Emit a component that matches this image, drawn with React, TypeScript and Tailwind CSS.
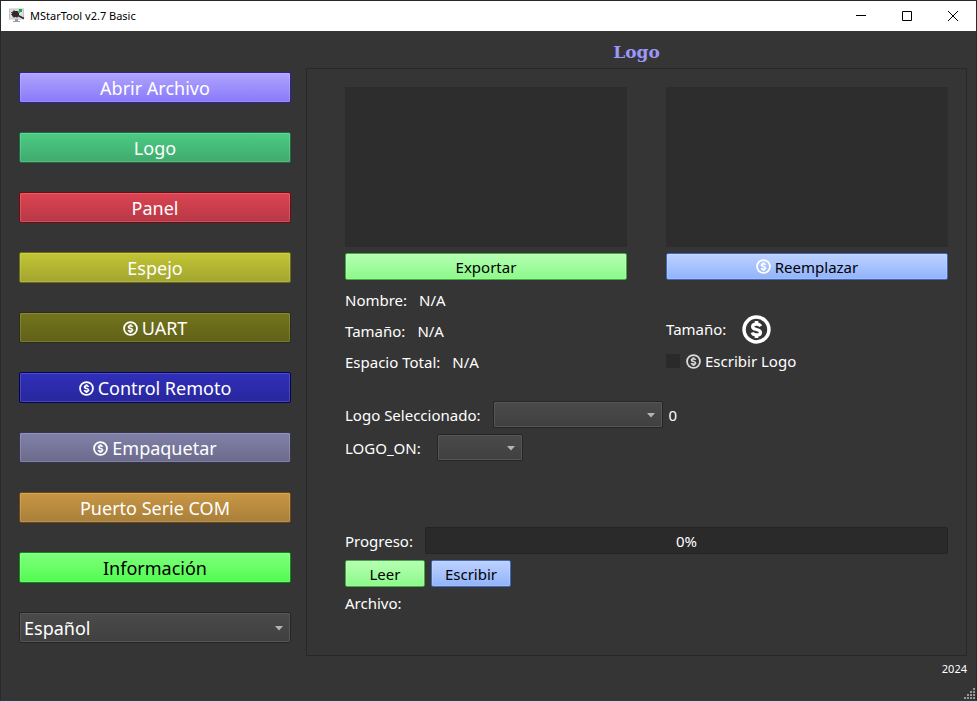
import type { ReactNode } from "react";

function DollarIcon({ className }: { className: string }) {
  return (
    <svg viewBox="0 0 24 24" fill="none" stroke="currentColor" className={className} aria-hidden="true">
      <circle cx="12" cy="12" r="10.3" strokeWidth="2.9" />
      <path d="M15.4 9.3C14.8 8 13.500 7.600 12 7.600c-1.900 0-3.200.8-3.200 2.100 0 1.500 1.500 1.900 3.200 2.300s3.300.9 3.300 2.400c0 1.400-1.400 2.100-3.300 2.100-1.800 0-3.100-.6-3.500-2" strokeWidth="2.700" />
      <path d="M12 5v3M12 16v3" strokeWidth="3" />
    </svg>
  );
}

function AppIcon() {
  return (
    <svg viewBox="0 0 16 16" className="size-4" aria-hidden="true">
      <rect x="0.500" y="1" width="14" height="10" fill="#dcdee0" stroke="#c3c5c8" />
      <path d="M6 11h3v2h2v1H4v-1h2z" fill="#9a9da0" />
      <rect x="3" y="3" width="7" height="6" rx="2" fill="#33272b" />
      <path d="M3 4.500H2M3 6.500H2M5 9v1M8 9v1M5 3V2" stroke="#55494c" />
      <path d="M9 7.500l6 3" stroke="#33272b" strokeWidth="1.600" />
      <rect x="10" y="1" width="3" height="3" fill="#23a047" />
      <rect x="9" y="3" width="2" height="2" fill="#2fbf56" />
    </svg>
  );
}

function SelectBox({ id, label, className, children }: { id: string; label?: string; className: string; children?: ReactNode }) {
  return (
    <div className={`relative ${className}`}>
      <select
        id={id}
        aria-label={label}
        className="block size-full appearance-none rounded-xs border border-[#252525] bg-linear-to-b from-[#4a4a4a] to-[#404040] pl-1 pr-6 pt-px inset-ring inset-ring-[#565656] outline-none"
      >
        {children}
      </select>
      <svg viewBox="0 0 8 5" className="pointer-events-none absolute right-2 top-1/2 -mt-0.5 h-[5px] w-2" aria-hidden="true">
        <path d="M0 0h8L4 4.500z" fill="#b4b4b4" />
      </svg>
    </div>
  );
}

const navItems = [
  { text: "Abrir Archivo", paid: false, style: "border-[#2c2492] from-[#b0a3ff] to-[#8a79f8] text-white" },
  { text: "Logo", paid: false, style: "border-[#1c6b40] from-[#4ccc85] to-[#40aa6e] text-white" },
  { text: "Panel", paid: false, style: "border-[#740912] from-[#dc4452] to-[#b83846] text-white" },
  { text: "Espejo", paid: false, style: "border-[#6b6d12] from-[#c2c534] to-[#a2a52e] text-white" },
  { text: "UART", paid: true, style: "border-[#2c2d16] from-[#74751c] to-[#606118] text-white" },
  { text: "Control Remoto", paid: true, style: "border-[#02025c] from-[#302fba] to-[#28279c] text-white" },
  { text: "Empaquetar", paid: true, style: "border-[#35344f] from-[#8180a8] to-[#6c6b8d] text-white" },
  { text: "Puerto Serie COM", paid: false, style: "border-[#70480f] from-[#c89744] to-[#a87f3a] text-white" },
  { text: "Información", paid: false, style: "border-[#14881c] from-[#7dff7b] to-[#50fb4f] text-black" },
];

const bevel = "rounded-xs border bg-linear-to-b inset-ring inset-ring-white/15";
const green = "border-[#40ac40] from-[#b5ffb2] to-[#8bf989] text-black";
const blue = "border-[#3d68bc] from-[#bdd1ff] to-[#92b3fa] text-black";

export default function App() {
  return (
    <div className="flex min-h-screen flex-col border-x border-y border-x-[#272a2d] border-t-[#292528] border-b-[#1d4260] bg-[#353535] font-['Noto_Sans',sans-serif] text-[15px] leading-6 text-white">
      <header className="flex h-[30px] items-center bg-white pl-2 text-black">
        <AppIcon />
        <h1 className="ml-[5px] flex-1 text-[11px]">MStarTool v2.7 Basic</h1>
        <button aria-label="Minimizar" className="flex h-full w-[46px] items-center justify-center">
          <svg viewBox="0 0 10 10" className="size-2.5" stroke="black"><path d="M0 4.500h10" /></svg>
        </button>
        <button aria-label="Maximizar" className="flex h-full w-[46px] items-center justify-center">
          <svg viewBox="0 0 10 10" className="size-2.5" fill="none" stroke="black"><path d="M.5 .5h9v9h-9z" /></svg>
        </button>
        <button aria-label="Cerrar" className="flex h-full w-[46px] items-center justify-center">
          <svg viewBox="0 0 10 10" className="size-2.5" stroke="black"><path d="M0 0l10 10M10 0L0 10" /></svg>
        </button>
      </header>

      <div className="flex flex-1 gap-[15px] pl-[18px] pr-[9px]">
        <nav className="flex w-[272px] shrink-0 flex-col gap-[29px] pt-[41px] text-lg">
          {navItems.map((item) => (
            <button key={item.text} className={`flex h-[31px] items-center justify-center gap-1 pt-px ${bevel} ${item.style}`}>
              {item.paid && <DollarIcon className="size-[15px]" />}
              {item.text}
            </button>
          ))}
          <SelectBox id="language" label="Idioma" className="h-[31px]">
            <option>Español</option>
          </SelectBox>
        </nav>

        <main className="flex flex-1 flex-col">
          <h2 className="flex h-[37px] items-center justify-center pt-1 font-['DejaVu_Serif',serif] text-[17px] font-bold text-[#9c97f8]">Logo</h2>
          <section className="flex flex-1 flex-col border border-[#282828] pb-10 pl-[38px] pr-[18px] pt-[18px]">
            <div className="grid grid-cols-2 gap-[39px]">
              <div className="flex flex-col">
                <div className="h-40 bg-[#2d2d2d]" />
                <button className={`mb-1 mt-1.5 h-[27px] ${bevel} ${green}`}>Exportar</button>
                <dl>
                  <div className="flex h-[31px] items-center gap-3"><dt>Nombre:</dt><dd>N/A</dd></div>
                  <div className="flex h-[31px] items-center gap-3"><dt>Tamaño:</dt><dd>N/A</dd></div>
                  <div className="flex h-[31px] items-center gap-3"><dt>Espacio Total:</dt><dd>N/A</dd></div>
                </dl>
              </div>
              <div className="flex flex-col">
                <div className="h-40 bg-[#2d2d2d]" />
                <button className={`mt-1.5 flex h-[27px] items-center justify-center gap-1 ${bevel} ${blue}`}>
                  <DollarIcon className="size-[15px] text-white" />
                  Reemplazar
                </button>
                <div className="mt-[33px] flex h-8 items-center gap-4">
                  Tamaño:
                  <DollarIcon className="size-[29px]" />
                </div>
                <label className="flex h-8 items-center gap-1.5">
                  <input type="checkbox" className="size-3.5 appearance-none bg-[#2a2a2a] checked:bg-[#92b3fa]" />
                  <span className="flex items-center gap-1">
                    <DollarIcon className="size-[15px] text-[#dadada]" />
                    Escribir Logo
                  </span>
                </label>
              </div>
            </div>

            <div className="mt-6 flex items-center">
              <label htmlFor="logo">Logo Seleccionado:</label>
              <SelectBox id="logo" className="ml-3 mr-1.5 h-[27px] w-[170px]" />
              <output htmlFor="logo">0</output>
            </div>
            <div className="mt-1.5 flex items-center">
              <label htmlFor="logo-on">LOGO_ON:</label>
              <SelectBox id="logo-on" className="ml-4 h-[27px] w-[86px]" />
            </div>

            <div className="mt-auto flex items-center gap-3">
              <span id="progress-label">Progreso:</span>
              <div
                role="progressbar"
                aria-labelledby="progress-label"
                aria-valuenow={0}
                aria-valuemin={0}
                aria-valuemax={100}
                className="flex h-[27px] flex-1 items-center justify-center rounded-xs border border-[#242424] bg-[#2a2a2a]"
              >
                0%
              </div>
            </div>
            <div className="mt-1.5 flex gap-1.5">
              <button className={`h-[27px] w-20 ${bevel} ${green}`}>Leer</button>
              <button className={`h-[27px] w-20 ${bevel} ${blue}`}>Escribir</button>
            </div>
            <p className="mt-1">Archivo:</p>
          </section>
        </main>
      </div>

      <footer className="flex h-11 flex-col items-end justify-between pt-1">
        <span className="mr-[9px] text-[11px] leading-[18px]">2024</span>
        <svg viewBox="0 0 12 12" className="size-3" fill="#989898" aria-hidden="true">
          <path d="M9 0h2v2H9zM9 3h2v2H9zM6 3h2v2H6zM9 6h2v2H9zM6 6h2v2H6zM3 6h2v2H3zM9 9h2v2H9zM6 9h2v2H6zM3 9h2v2H3zM0 9h2v2H0z" />
        </svg>
      </footer>
    </div>
  );
}
